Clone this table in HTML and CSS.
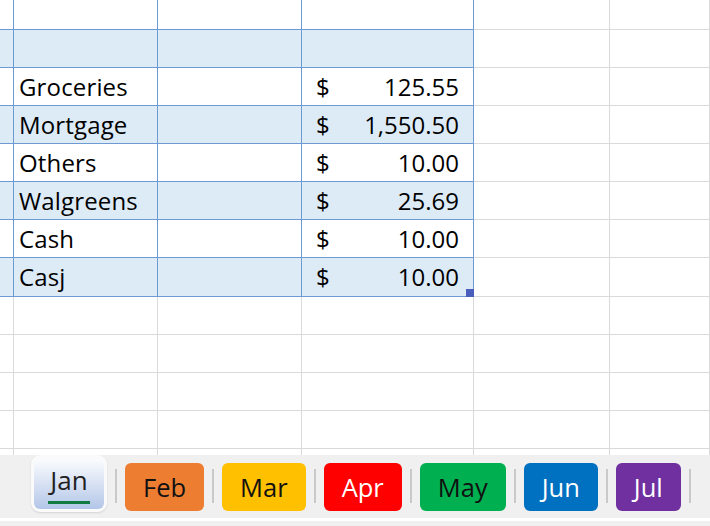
FILE: index.html
```html
<!DOCTYPE html>
<html>
<head>
<meta charset="utf-8">
<link rel="stylesheet" href="styles.css">
</head>
<body>
<div class="app">
  <div class="sheet">
    <div class="row tbl r-top">
      <div class="cell c0"></div><div class="cell c1"></div><div class="cell c2"></div><div class="cell c3"></div><div class="cell c4"></div><div class="cell c5"></div>
    </div>
    <div class="row tbl band">
      <div class="cell c0"></div><div class="cell c1"></div><div class="cell c2"></div><div class="cell c3"></div><div class="cell c4"></div><div class="cell c5"></div>
    </div>
    <div class="row tbl">
      <div class="cell c0"></div><div class="cell c1 label">Groceries</div><div class="cell c2"></div><div class="cell c3 amt"><span>$</span><span>125.55</span></div><div class="cell c4"></div><div class="cell c5"></div>
    </div>
    <div class="row tbl band">
      <div class="cell c0"></div><div class="cell c1 label">Mortgage</div><div class="cell c2"></div><div class="cell c3 amt"><span>$</span><span>1,550.50</span></div><div class="cell c4"></div><div class="cell c5"></div>
    </div>
    <div class="row tbl">
      <div class="cell c0"></div><div class="cell c1 label">Others</div><div class="cell c2"></div><div class="cell c3 amt"><span>$</span><span>10.00</span></div><div class="cell c4"></div><div class="cell c5"></div>
    </div>
    <div class="row tbl band">
      <div class="cell c0"></div><div class="cell c1 label">Walgreens</div><div class="cell c2"></div><div class="cell c3 amt"><span>$</span><span>25.69</span></div><div class="cell c4"></div><div class="cell c5"></div>
    </div>
    <div class="row tbl">
      <div class="cell c0"></div><div class="cell c1 label">Cash</div><div class="cell c2"></div><div class="cell c3 amt"><span>$</span><span>10.00</span></div><div class="cell c4"></div><div class="cell c5"></div>
    </div>
    <div class="row tbl band r-last">
      <div class="cell c0"></div><div class="cell c1 label">Casj</div><div class="cell c2"></div><div class="cell c3 amt"><span>$</span><span>10.00</span><i class="handle"></i></div><div class="cell c4"></div><div class="cell c5"></div>
    </div>
    <div class="row">
      <div class="cell c0"></div><div class="cell c1"></div><div class="cell c2"></div><div class="cell c3"></div><div class="cell c4"></div><div class="cell c5"></div>
    </div>
    <div class="row">
      <div class="cell c0"></div><div class="cell c1"></div><div class="cell c2"></div><div class="cell c3"></div><div class="cell c4"></div><div class="cell c5"></div>
    </div>
    <div class="row">
      <div class="cell c0"></div><div class="cell c1"></div><div class="cell c2"></div><div class="cell c3"></div><div class="cell c4"></div><div class="cell c5"></div>
    </div>
    <div class="row">
      <div class="cell c0"></div><div class="cell c1"></div><div class="cell c2"></div><div class="cell c3"></div><div class="cell c4"></div><div class="cell c5"></div>
    </div>
    <div class="row">
      <div class="cell c0"></div><div class="cell c1"></div><div class="cell c2"></div><div class="cell c3"></div><div class="cell c4"></div><div class="cell c5"></div>
    </div>
  </div>
  <div class="tabbar">
    <div class="active-frame">
      <div class="active-tab">
        <span class="active-label">Jan</span>
        <span class="active-line"></span>
      </div>
    </div>
    <span class="sep"></span>
    <div class="tab t-orange">Feb</div>
    <span class="sep"></span>
    <div class="tab t-yellow">Mar</div>
    <span class="sep"></span>
    <div class="tab t-red">Apr</div>
    <span class="sep"></span>
    <div class="tab t-green">May</div>
    <span class="sep"></span>
    <div class="tab t-blue">Jun</div>
    <span class="sep"></span>
    <div class="tab t-purple">Jul</div>
    <span class="sep"></span>
  </div>
  <div class="bottom-strip"></div>
</div>
</body>
</html>
```
FILE: styles.css
```css
* { box-sizing: border-box; }
html, body { margin: 0; padding: 0; background: #ffffff; }
body { width: 710px; height: 526px; overflow: hidden; font-family: "Open Sans", "Noto Sans", sans-serif; }

.app { width: 710px; height: 526px; display: flex; flex-direction: column; }

.sheet { height: 455px; overflow: hidden; flex: none; }

.row { display: flex; height: 38px; }
.row.r-top { height: 30px; }
.row.r-last { height: 39px; }

.cell {
  border-right: 1px solid #dadada;
  border-bottom: 1px solid #dadada;
  font-size: 24px;
  line-height: 37px;
  color: #000;
  white-space: nowrap;
  flex: none;
}
.c0 { width: 14px; }
.c1 { width: 144px; }
.c2 { width: 144px; }
.c3 { width: 172px; }
.c4 { width: 136px; }
.c5 { flex: 1 1 auto; }

.row.tbl .c0, .row.tbl .c1, .row.tbl .c2, .row.tbl .c3 { border-color: #6e9ad3; }
.row.band .c0, .row.band .c1, .row.band .c2, .row.band .c3 { background: #ddebf7; }
.row.r-last .cell { line-height: 38px; }

.label { padding-left: 5px; letter-spacing: 0.15px; }
.amt { display: flex; justify-content: space-between; padding: 0 14px 0 14px; position: relative; }

.handle {
  position: absolute;
  right: -1px;
  bottom: -1px;
  width: 8px;
  height: 8px;
  background: #4a5fbd;
}

.tabbar {
  height: 63px;
  flex: none;
  background: #f0f0f0;
  display: flex;
  align-items: flex-start;
  padding-left: 31px;
}
.bottom-strip { flex: 1; background: #f0f0f0; border-top: 3px solid #ffffff; }

.active-frame {
  width: 76px;
  height: 57px;
  background: #fafafa;
  border-radius: 9px;
  padding: 4px 3px 3px 3px;
  box-shadow: 0 1px 2px rgba(0,0,0,0.12);
  flex: none;
}
.active-tab {
  height: 50px;
  border-radius: 6px;
  background: linear-gradient(#fbfcfe, #b3c6e8);
  display: flex;
  flex-direction: column;
  align-items: center;
  padding-top: 6px;
}
.active-label { font-size: 26px; line-height: 30px; color: #222; }
.active-line { width: 42px; height: 3px; margin-top: 6px; background: #107c41; }

.sep { width: 2px; height: 34px; margin: 14px 8px 0 8px; background: #c9c9c9; flex: none; }

.tab {
  height: 48px;
  margin-top: 8px;
  padding: 0 18px;
  border-radius: 6px;
  font-size: 25.5px;
  line-height: 48px;
  flex: none;
}
.t-orange { background: #ed7d31; color: #111; }
.t-yellow { background: #ffc000; color: #111; }
.t-red { background: #ff0000; color: #fff; }
.t-green { background: #00b050; color: #111; }
.t-blue { background: #0070c0; color: #fff; }
.t-purple { background: #7030a0; color: #fff; }
```
